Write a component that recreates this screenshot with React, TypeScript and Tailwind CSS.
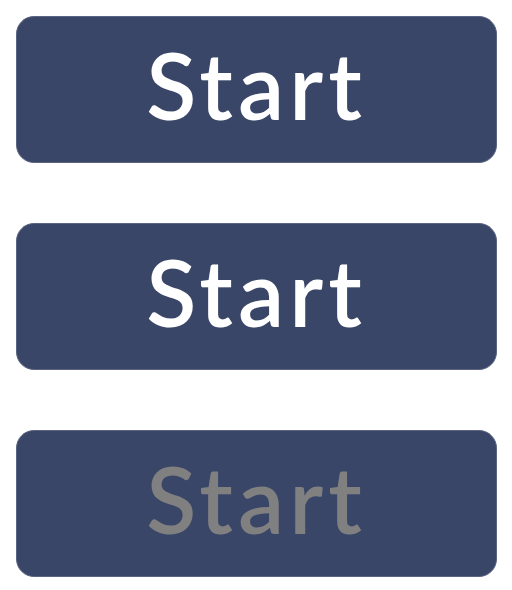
const buttons = [
  { id: "start-1", label: "Start", disabled: false },
  { id: "start-2", label: "Start", disabled: false },
  { id: "start-3", label: "Start", disabled: true },
];

export default function App() {
  return (
    <div className="w-[512px] h-[590px] bg-white flex flex-col gap-[60px] pt-4 pl-4">
      {buttons.map((b) => (
        <button
          key={b.id}
          disabled={b.disabled}
          className="w-[481px] h-[147px] rounded-[18px] bg-[#3a4668] border border-[#5b6482] flex items-center justify-center pb-[10px]"
        >
          <span
            className={
              b.disabled
                ? "font-['Lato',sans-serif] font-semibold text-[92px] leading-none tracking-[5px] text-[#808080]"
                : "font-['Lato',sans-serif] font-semibold text-[92px] leading-none tracking-[5px] text-white"
            }
          >
            {b.label}
          </span>
        </button>
      ))}
    </div>
  );
}
